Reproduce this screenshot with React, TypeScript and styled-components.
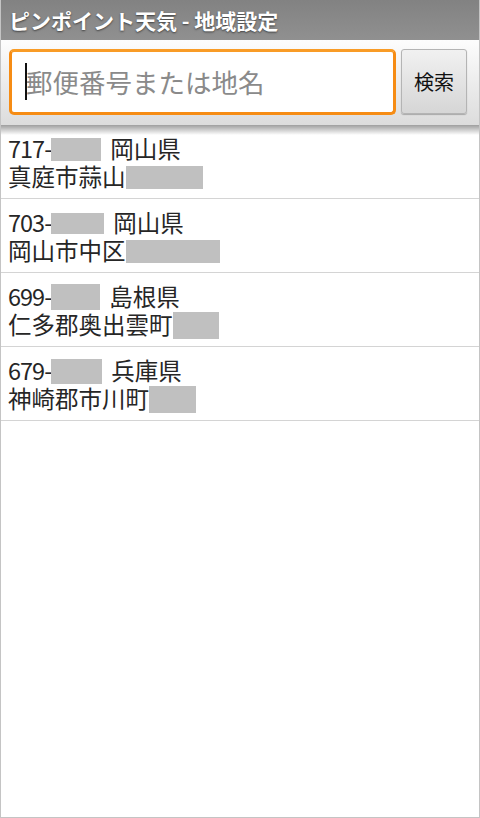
import React from 'react';
import styled, { createGlobalStyle } from 'styled-components';

const GlobalStyle = createGlobalStyle`
  html, body {
    margin: 0;
    padding: 0;
    background: #fff;
  }
  body {
    font-family: 'Noto Sans CJK JP', 'Noto Sans', sans-serif;
  }
`;

const Screen = styled.div`
  width: 480px;
  height: 818px;
  box-sizing: border-box;
  border: 1px solid #c4c4c4;
  border-top: none;
  background: #fff;
  overflow: hidden;
  display: flex;
  flex-direction: column;
`;

const TitleBar = styled.header`
  height: 40px;
  flex-shrink: 0;
  display: flex;
  align-items: center;
  padding-left: 8px;
  background: linear-gradient(to bottom, #828282, #909090);
  color: #fff;
  font-size: 21px;
  font-weight: bold;
  line-height: 1;
  text-shadow: 0 1px 2px rgba(0, 0, 0, 0.55);
`;

const SearchBar = styled.div`
  position: relative;
  height: 85px;
  flex-shrink: 0;
  box-sizing: border-box;
  display: flex;
  align-items: flex-start;
  gap: 5px;
  padding: 9px 12px 0 8px;
  background: linear-gradient(to bottom, #fdfdfd, #dcdcdc);
  z-index: 1;

  &::after {
    content: '';
    position: absolute;
    left: 0;
    right: 0;
    top: 100%;
    height: 10px;
    background: linear-gradient(to bottom, rgba(0, 0, 0, 0.38), rgba(0, 0, 0, 0));
  }
`;

const InputBox = styled.label`
  position: relative;
  flex: 1;
  height: 66px;
  box-sizing: border-box;
  border: 3px solid #f68c14;
  border-top-color: #f99c26;
  border-radius: 5px;
  background: #fff;
  display: flex;
  align-items: center;
`;

const Caret = styled.span`
  position: absolute;
  left: 13px;
  top: 11px;
  width: 1.5px;
  height: 37px;
  background: #111;
`;

const SearchInput = styled.input`
  width: 100%;
  height: 100%;
  box-sizing: border-box;
  border: none;
  outline: none;
  background: transparent;
  padding: 0 0 2px 14px;
  font-family: 'Noto Sans CJK JP', 'Noto Sans', sans-serif;
  font-size: 26.5px;
  color: #222;

  &::placeholder {
    color: #8a8a8a;
  }
`;

const SearchButton = styled.button`
  width: 66px;
  height: 65px;
  box-sizing: border-box;
  border: 1px solid #b4b4b4;
  border-radius: 3px;
  background: linear-gradient(to bottom, #f1f1f1, #d6d6d6);
  box-shadow: 0 1px 1px rgba(0, 0, 0, 0.25);
  font-family: 'Noto Sans CJK JP', 'Noto Sans', sans-serif;
  font-size: 20px;
  color: #111;
  padding: 0;
`;

const List = styled.ul`
  list-style: none;
  margin: 0;
  padding: 0;
`;

const Row = styled.li`
  padding: 10px 7px 7px;
  border-bottom: 1px solid #d4d4d4;
  font-size: 23.5px;
  line-height: 28px;
  color: #262626;
`;

const Line = styled.div`
  white-space: nowrap;
  display: flex;
  align-items: center;
  height: 28px;
  line-height: 1;
`;

const Zip = styled.span`
  letter-spacing: -1px;
`;

const Mask = styled.span<{ $w: number; $h: number }>`
  display: inline-block;
  width: ${p => p.$w}px;
  height: ${p => p.$h}px;
  background: #c0c0c0;
`;

const Pref = styled.span`
  margin-left: 9px;
`;

const places = [
  { zip: '717-', zipMask: [50, 23], pref: '岡山県', city: '真庭市蒜山', cityMask: [77, 23] },
  { zip: '703-', zipMask: [53, 21], pref: '岡山県', city: '岡山市中区', cityMask: [94, 23] },
  { zip: '699-', zipMask: [49, 26], pref: '島根県', city: '仁多郡奥出雲町', cityMask: [46, 27] },
  { zip: '679-', zipMask: [51, 25], pref: '兵庫県', city: '神崎郡市川町', cityMask: [47, 27] },
];

const App: React.FC = () => {
  return (
    <>
      <GlobalStyle />
      <Screen>
        <TitleBar>ピンポイント天気 - 地域設定</TitleBar>
        <SearchBar>
          <InputBox>
            <Caret />
            <SearchInput placeholder="郵便番号または地名" />
          </InputBox>
          <SearchButton>検索</SearchButton>
        </SearchBar>
        <List>
          {places.map(p => (
            <Row key={p.zip + p.pref}>
              <Line>
                <Zip>{p.zip}</Zip>
                <Mask $w={p.zipMask[0]} $h={p.zipMask[1]} />
                <Pref>{p.pref}</Pref>
              </Line>
              <Line>
                {p.city}
                <Mask $w={p.cityMask[0]} $h={p.cityMask[1]} />
              </Line>
            </Row>
          ))}
        </List>
      </Screen>
    </>
  );
};

export default App;
